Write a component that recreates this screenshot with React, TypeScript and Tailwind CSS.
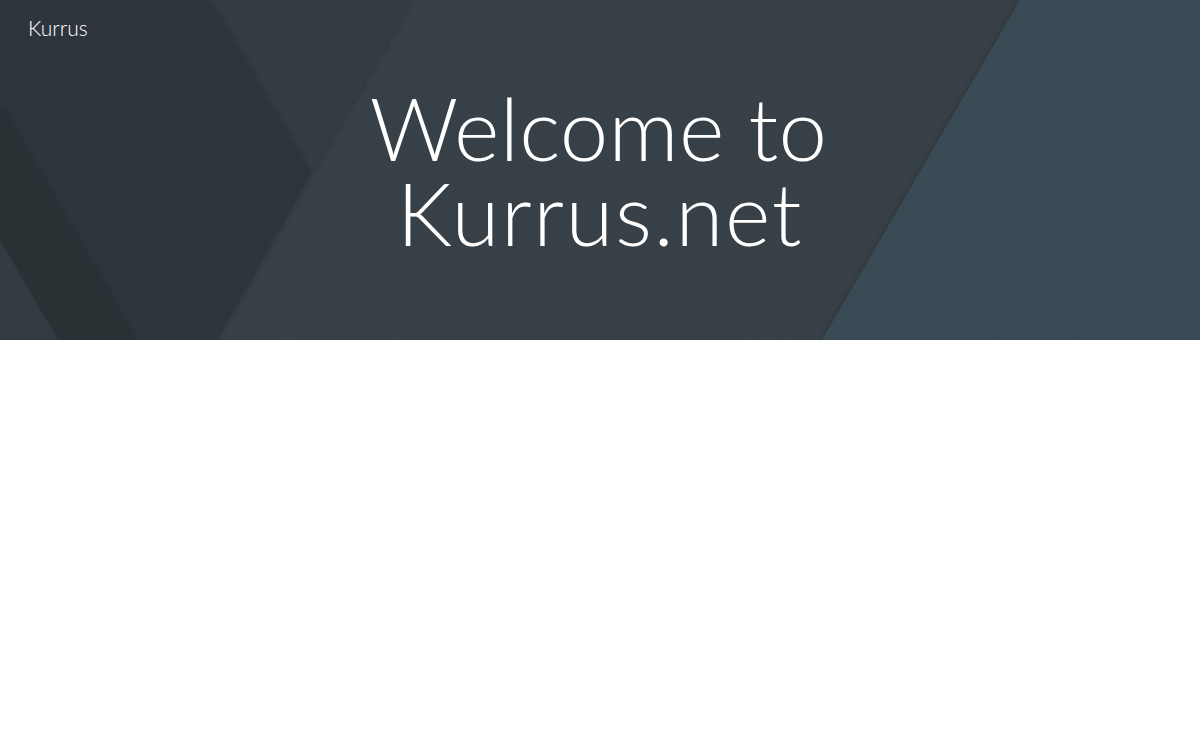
const HeroBackground = () => (
  <svg
    className="absolute inset-0 h-full w-full"
    viewBox="0 0 1200 340"
    preserveAspectRatio="none"
    aria-hidden="true"
  >
    <defs>
      <filter id="edge" x="-10%" y="-10%" width="120%" height="120%">
        <feDropShadow dx="0" dy="0" stdDeviation="3" floodColor="#000000" floodOpacity="0.25" />
      </filter>
      <filter id="grain" x="0" y="0" width="100%" height="100%">
        <feTurbulence type="fractalNoise" baseFrequency="0.55" numOctaves="2" seed="4" />
        <feColorMatrix values="0 0 0 0 0  0 0 0 0 0  0 0 0 0 0  0 0 0 0.5 -0.2" />
      </filter>
    </defs>
    <rect width="1200" height="340" fill="#384147" />
    <polygon points="210,0 412,0 311,174" fill="#343c43" filter="url(#edge)" />
    <polygon points="1020,0 1200,0 1200,340 822,340" fill="#3a4b54" filter="url(#edge)" />
    <polygon points="0,0 210,0 311,174 217,340 0,340" fill="#2d363c" filter="url(#edge)" />
    <polygon points="0,105 135,340 58,340 0,240" fill="#2b3236" filter="url(#edge)" />
    <polygon points="0,240 58,340 0,340" fill="#343c43" />
    <rect width="1200" height="340" filter="url(#grain)" opacity="0.08" />
  </svg>
);

export default function App() {
  return (
    <div className="min-h-[740px] bg-white font-['Lato',sans-serif]">
      <header className="relative h-[340px] overflow-hidden">
        <HeroBackground />
        <div className="relative px-[28px] pt-[15px]">
          <a href="#" className="block text-[21px] leading-[26px] font-light text-white">
            Kurrus
          </a>
        </div>
        <h1 className="relative mt-[44px] text-center text-[87px] leading-[85px] font-light text-white">
          <span className="block pr-[3px] tracking-[0.3px]">Welcome to</span>
          <span className="block tracking-[1.6px]">Kurrus.net</span>
        </h1>
      </header>
    </div>
  );
}
